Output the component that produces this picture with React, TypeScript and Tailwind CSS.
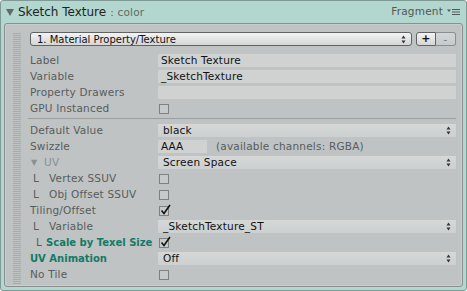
import React from 'react';

const Check: React.FC<{ checked?: boolean }> = ({ checked }) => (
  <div className="relative w-[10px] h-[10px] ml-[1px] border border-[#7d8181] bg-[#c6caca]">
    {checked && (
      <svg className="absolute left-[0px] top-[-3px]" width="12" height="12" viewBox="0 0 12 12">
        <path d="M1.5 6.5 L4 9.5 L10 1" fill="none" stroke="#111" strokeWidth="1.6" />
      </svg>
    )}
  </div>
);

const UpDown: React.FC = () => (
  <svg width="5" height="9" viewBox="0 0 5 9" className="shrink-0">
    <path d="M0.5 3.5 L2.5 0.5 L4.5 3.5 Z" fill="#333" />
    <path d="M0.5 5.5 L2.5 8.5 L4.5 5.5 Z" fill="#333" />
  </svg>
);

const Field: React.FC<{ text?: string; className?: string }> = ({ text, className }) => (
  <div className={`h-[13px] bg-[#d0d2d2] pl-[3px] text-[#111] leading-[13px] whitespace-nowrap ${className ?? ''}`}>{text}</div>
);

const Select: React.FC<{ text: string }> = ({ text }) => (
  <div className="h-[13px] bg-gradient-to-b from-[#d6d8d8] to-[#cdd0d0] pl-[5px] pr-[5px] flex items-center justify-between text-[#111]">
    <span className="whitespace-nowrap">{text}</span>
    <UpDown />
  </div>
);

const Row: React.FC<{ label: React.ReactNode; children?: React.ReactNode; labelClass?: string }> = ({ label, children, labelClass }) => (
  <div className="flex h-[13px] items-center mb-[3px] leading-[13px]">
    <div className={`w-[128px] shrink-0 flex items-center whitespace-nowrap ${labelClass ?? 'text-[#585c5c]'}`}>{label}</div>
    <div className="flex-1 min-w-0">{children}</div>
  </div>
);

const Sub: React.FC<{ text: string }> = ({ text }) => (
  <>
    <span className="w-[19px] shrink-0 pl-[3px] text-[#585c5c]">L</span>
    <span>{text}</span>
  </>
);

export default function App() {
  return (
    <div className="w-[467px] h-[291px] bg-[#b3d6ce] border border-[#7e9a94] rounded-[3px] flex flex-col font-['DejaVu_Sans',sans-serif] text-[10.5px] tracking-[0.2px] overflow-hidden">
      {/* header */}
      <div className="h-[22px] shrink-0 flex items-center pl-[5px] pr-[4px]">
        <svg width="8" height="7" viewBox="0 0 8 7" className="mr-[4px]">
          <path d="M0 0 H8 L4 7 Z" fill="#5f6b69" />
        </svg>
        <span className="text-[12px] text-[#1e2424] tracking-normal">Sketch Texture</span>
        <span className="text-[10.5px] text-[#5f6a68] ml-[4px] mt-[2px]">: color</span>
        <span className="ml-auto text-[10.5px] text-[#4f5857]">Fragment</span>
        <svg width="14" height="8" viewBox="0 0 14 8" className="ml-[4px] mr-[1px]">
          <path d="M0 1.5 H4 L2 4 Z" fill="#4f5857" />
          <path d="M5 1.5 H13 M5 4 H13 M5 6.5 H13" stroke="#4f5857" strokeWidth="1" />
        </svg>
      </div>

      {/* panel */}
      <div className="flex-1 mx-[3px] mb-[3px] bg-[#bfc3c3] border border-[#8a8f8f] rounded-[3px] flex shadow-[inset_0_0_0_1px_#c9cdcd]">
        <div className="w-[8px] ml-[8px] mt-[9px] mb-[2px] shrink-0 bg-[repeating-linear-gradient(to_bottom,#a7abab_0px,#a7abab_1px,transparent_1px,transparent_2px)]" />
        <div className="flex-1 pl-[9px] pr-[6px] pt-[8px]">
          <div className="flex h-[14px] mb-[8px]">
            <div className="flex-1 rounded-[3px] border border-[#5f6363] bg-gradient-to-b from-[#f3f3f3] to-[#d4d6d6] flex items-center justify-between pl-[6px] pr-[5px] text-[#111] text-[10px] tracking-normal">
              <span>1. Material Property/Texture</span>
              <UpDown />
            </div>
            <div className="w-[20px] ml-[4px] rounded-l-[3px] border border-[#5f6363] bg-gradient-to-b from-[#f3f3f3] to-[#d4d6d6] flex items-center justify-center text-[#111] font-bold text-[11px]">+</div>
            <div className="w-[20px] rounded-r-[3px] border border-l-0 border-[#8a8f8f] bg-gradient-to-b from-[#d4d7d7] to-[#c7caca] flex items-center justify-center text-[#777] text-[10px]">-</div>
          </div>

          <Row label="Label"><Field text="Sketch Texture" /></Row>
          <Row label="Variable"><Field text="_SketchTexture" /></Row>
          <Row label="Property Drawers"><Field /></Row>
          <Row label="GPU Instanced"><Check /></Row>
          <div className="h-[1px] bg-[#9a9e9e] -ml-[2px] mb-[5px]" />

          <Row label="Default Value"><Select text="black" /></Row>
          <Row label="Swizzle">
            <div className="flex items-center">
              <Field text="AAA" className="w-[49px] pl-[1px] tracking-normal" />
              <span className="ml-[9px] text-[#585c5c] whitespace-nowrap">(available channels: RGBA)</span>
            </div>
          </Row>
          <Row label={<><span className="text-[8px] text-[#8b9090] pl-[1px] w-[14px]">▼</span><span className="text-[#8b9090]">UV</span></>}>
            <Select text="Screen Space" />
          </Row>
          <Row label={<Sub text="Vertex SSUV" />}><Check /></Row>
          <Row label={<Sub text="Obj Offset SSUV" />}><Check /></Row>
          <Row label="Tiling/Offset"><Check checked /></Row>
          <Row label={<Sub text="Variable" />}><Select text="_SketchTexture_ST" /></Row>
          <Row
            labelClass="text-[#137a66] font-bold text-[10px] tracking-normal"
            label={<><span className="w-[16px] shrink-0 pl-[6px] text-[#585c5c] font-normal text-[10.5px]">L</span><span>Scale by Texel Size</span></>}
          >
            <Check checked />
          </Row>
          <Row labelClass="text-[#137a66] font-bold text-[10px] tracking-normal" label="UV Animation"><Select text="Off" /></Row>
          <Row label="No Tile"><Check /></Row>
        </div>
      </div>
    </div>
  );
}
